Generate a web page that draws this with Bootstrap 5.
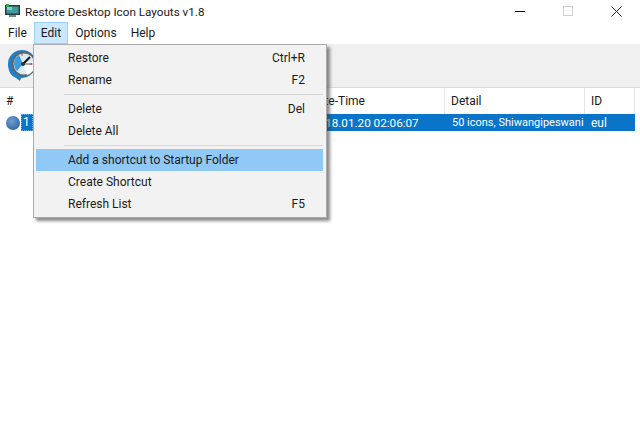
<!DOCTYPE html>
<html lang="en"><head><meta charset="utf-8"><title>Restore Desktop Icon Layouts</title>
<link href="https://cdn.jsdelivr.net/npm/bootstrap@5.3.0/dist/css/bootstrap.min.css" rel="stylesheet">
<style>
html,body{width:640px;height:425px;overflow:hidden;background:#fff}
body{font-family:"Roboto","Noto Sans","Liberation Sans",sans-serif;font-size:12px;line-height:16px;color:#1a1a1a;position:relative}
.titlebar{height:22px;padding-left:5px}
.titlebar .ttl{margin-left:4px;margin-top:2px;font-size:11.7px}
.winbtns{margin-left:auto;height:22px}
.winbtn{width:48px;height:22px}
.menubar{height:22px;padding-left:1px}
.mitem{height:22px;padding:0 6px;display:flex;align-items:center;border:1px solid transparent}
.mitem.open{background:#cce8ff;border-color:#99d1ff}
.toolbar{height:44px;background:#f0f0f0;border-bottom:1px solid #dcdcdc;padding-left:7px}
.listwrap{height:337px}
.lv{width:635px;table-layout:fixed;margin:0;border-collapse:separate;border-spacing:0;--bs-table-bg:transparent;--bs-table-color:#1a1a1a}
.lv th{font-weight:400;height:26px;padding:0 0 0 6px;border:0;border-right:1px solid #e5e5e5;vertical-align:middle}
.lv th.dth{padding-left:4px}
.lv td{height:17px;padding:0 0 0 6px;border:0;vertical-align:middle;white-space:nowrap;overflow:visible}
.lv .sel td{background:#0a74c9;color:#fff}
.lv .sel td.firstc{background:transparent;padding:0;color:#fff}
.lv .sel td.dtc{font-size:11.7px}
.lv .sel td.detc{font-size:11px;padding-left:7px}
.dot{width:14px;height:14px;border-radius:50%;background:radial-gradient(circle at 40% 35%,#6d9fd2,#3a6ea8 70%,#2c5a8c);display:block;margin-left:6px}
.numlbl{background:#0a74c9;outline:1px dotted #6fb0e6;outline-offset:-1px;width:12px;height:17px;margin-left:1px;padding-left:2px;display:block}
.popmenu{position:absolute;left:33px;top:44px;width:294px;height:174px;background:#f2f2f2;border:1px solid #ababab;padding:2px 3px 2px 2px;box-shadow:3px 3px 3px rgba(60,60,60,.6);display:block;border-radius:0;margin:0;min-width:0;font-size:12px;color:#1a1a1a}
.pitem{height:22px;display:flex;align-items:center;padding:0 18px 0 32px;justify-content:space-between}
.pitem.hot{background:#90c8f6}
.psep{height:1px;background:#d7d7d7;margin:3px 0 3px 28px}
</style></head>
<body>
<div class="titlebar d-flex align-items-center">
<svg width="16" height="16" viewBox="0 0 16 16"><rect x="0" y="2" width="15" height="10" fill="#2a3a45"/><rect x="1.5" y="3.5" width="12" height="7" fill="#3f9c9a"/><rect x="2" y="4" width="5" height="3" fill="#7fd0d8"/><rect x="4" y="12" width="7" height="2" fill="#7a8a92"/><rect x="1" y="1" width="3" height="3" fill="#3aa655"/></svg>
<span class="ttl">Restore Desktop Icon Layouts v1.8</span>
<div class="winbtns d-flex">
<div class="winbtn d-flex align-items-center justify-content-center"><svg width="10" height="10"><path d="M0 5.5H10" stroke="#111" stroke-width="1"/></svg></div>
<div class="winbtn d-flex align-items-center justify-content-center"><svg width="10" height="10"><rect x=".5" y=".5" width="9" height="9" fill="none" stroke="#cfcfcf"/></svg></div>
<div class="winbtn d-flex align-items-center justify-content-center"><svg width="11" height="11"><path d="M.5 .5L10.5 10.5M10.5 .5L.5 10.5" stroke="#222" stroke-width="1"/></svg></div>
</div></div>
<div class="menubar d-flex">
<div class="mitem">File</div><div class="mitem open">Edit</div><div class="mitem">Options</div><div class="mitem">Help</div>
</div>
<div class="toolbar d-flex align-items-center">
<svg width="32" height="34" viewBox="0 0 32 34"><path d="M15 1A14 14 0 0 0 1 15C1 22 4 27 9 29L13 32L14 29C22 29 29 23 29 15A14 14 0 0 0 15 1Z" fill="#1f7fc9"/><circle cx="17" cy="15" r="12.5" fill="#5f666c"/><circle cx="17" cy="15" r="10.5" fill="#dceaf3"/><path d="M16 15L20 26A10.500 10.500 0 0 0 27 12Z" fill="#fbfdfe"/><path d="M7 15A10 10 0 0 1 12 6L16 15L10 22A10 10 0 0 1 7 15Z" fill="#3a9be0"/><path d="M16 15L23 8" stroke="#111" stroke-width="2"/><path d="M16 15L24 15" stroke="#555" stroke-width="1"/><circle cx="16" cy="15" r="2" fill="#333"/><circle cx="24.500" cy="15" r="1" fill="#c33"/><circle cx="15" cy="6" r="1" fill="#c85"/></svg>
</div>
<div class="listwrap">
<table class="table lv">
<colgroup><col style="width:34px"><col style="width:272px"><col style="width:139px"><col style="width:140px"><col style="width:50px"></colgroup>
<thead><tr><th>#</th><th></th><th class="dth">Date-Time</th><th>Detail</th><th>ID</th></tr></thead>
<tbody><tr class="sel"><td class="firstc"><div class="d-flex align-items-center"><span class="dot"></span><span class="numlbl">1</span></div></td><td></td><td class="dtc">2018.01.20 02:06:07</td><td class="detc">50 icons, Shiwangipeswani</td><td>eul</td></tr></tbody>
</table>
</div>
<div class="dropdown-menu popmenu">
<div class="pitem"><span>Restore</span><span>Ctrl+R</span></div>
<div class="pitem"><span>Rename</span><span>F2</span></div>
<div class="psep"></div>
<div class="pitem"><span>Delete</span><span>Del</span></div>
<div class="pitem"><span>Delete All</span></div>
<div class="psep"></div>
<div class="pitem hot"><span>Add a shortcut to Startup Folder</span></div>
<div class="pitem"><span>Create Shortcut</span></div>
<div class="pitem"><span>Refresh List</span><span>F5</span></div>
</div>
<script src="https://cdn.jsdelivr.net/npm/bootstrap@5.3.0/dist/js/bootstrap.bundle.min.js"></script>
</body></html>
